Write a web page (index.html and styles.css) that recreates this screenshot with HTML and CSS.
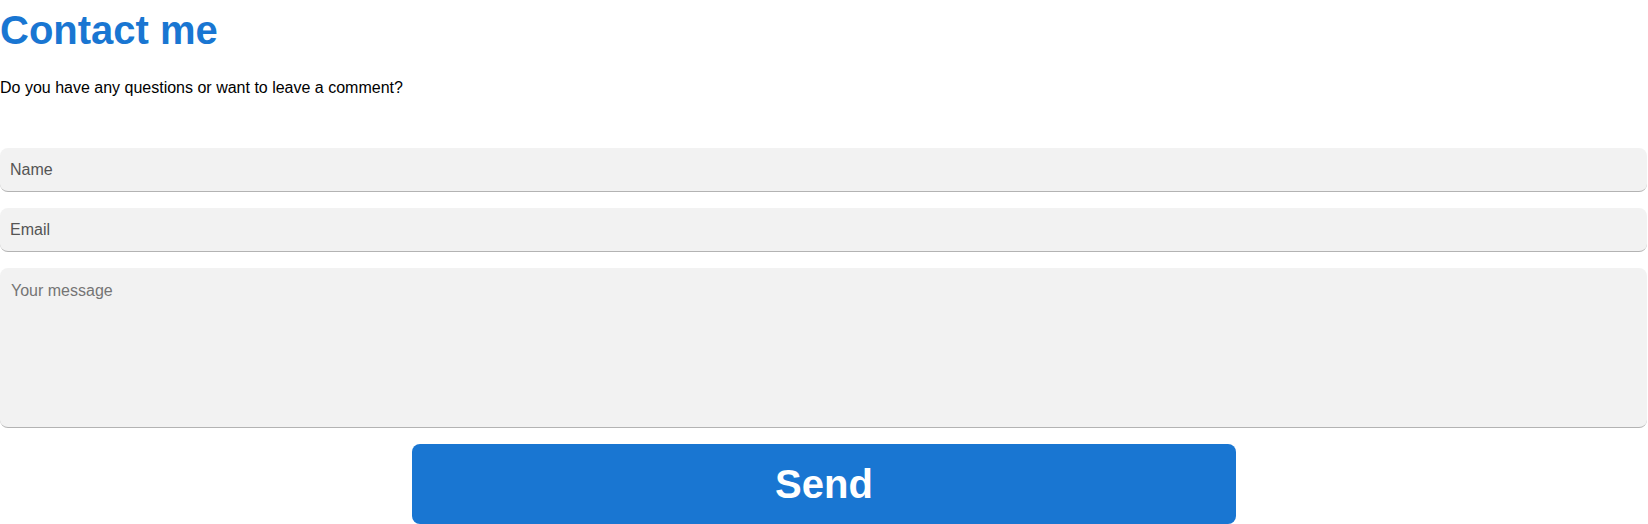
FILE: index.html
```html
<!DOCTYPE html>
<html lang="en">
<head>
<meta charset="utf-8">
<title>Contact me</title>
<link rel="stylesheet" href="styles.css">
</head>
<body>
<main class="contact">
  <h1 class="title">Contact me</h1>
  <p class="intro">Do you have any questions or want to leave a comment?</p>
  <form class="form">
    <input class="field" type="text" placeholder="Name">
    <input class="field" type="email" placeholder="Email">
    <textarea class="field area" placeholder="Your message"></textarea>
    <button class="send" type="button">Send</button>
  </form>
</main>
</body>
</html>
```

FILE: styles.css
```css
html, body {
  margin: 0;
  padding: 0;
  background: #ffffff;
}
body {
  font-family: "Liberation Sans", Arial, sans-serif;
  color: #000;
}
.contact {
  display: flex;
  flex-direction: column;
}
.title {
  margin: 7px 0 0 0;
  font-size: 40px;
  line-height: 46px;
  font-weight: bold;
  color: #1976d2;
}
.intro {
  margin: 26px 0 0 0;
  font-size: 16px;
  line-height: 18px;
}
.form {
  display: flex;
  flex-direction: column;
  gap: 16px;
  margin-top: 51px;
}
.field {
  box-sizing: border-box;
  width: calc(100% - 1px);
  height: 44px;
  margin: 0;
  padding: 12px 10px;
  border: none;
  border-bottom: 1px solid #b3b3b3;
  border-radius: 8px;
  background: #f2f2f2;
  font-family: "Liberation Sans", Arial, sans-serif;
  font-size: 16px;
  color: #333;
  outline: none;
}
.field::placeholder {
  color: #555555;
  opacity: 1;
}
.area {
  height: 160px;
  padding: 14px 11px 12px 11px;
  resize: none;
  display: block;
}
.area::placeholder {
  color: #757575;
}
.send {
  align-self: center;
  width: 50%;
  height: 80px;
  margin: 0;
  border: none;
  border-radius: 8px;
  background: #1976d2;
  color: #ffffff;
  font-family: "Liberation Sans", Arial, sans-serif;
  font-size: 40px;
  font-weight: bold;
  cursor: pointer;
}
```
